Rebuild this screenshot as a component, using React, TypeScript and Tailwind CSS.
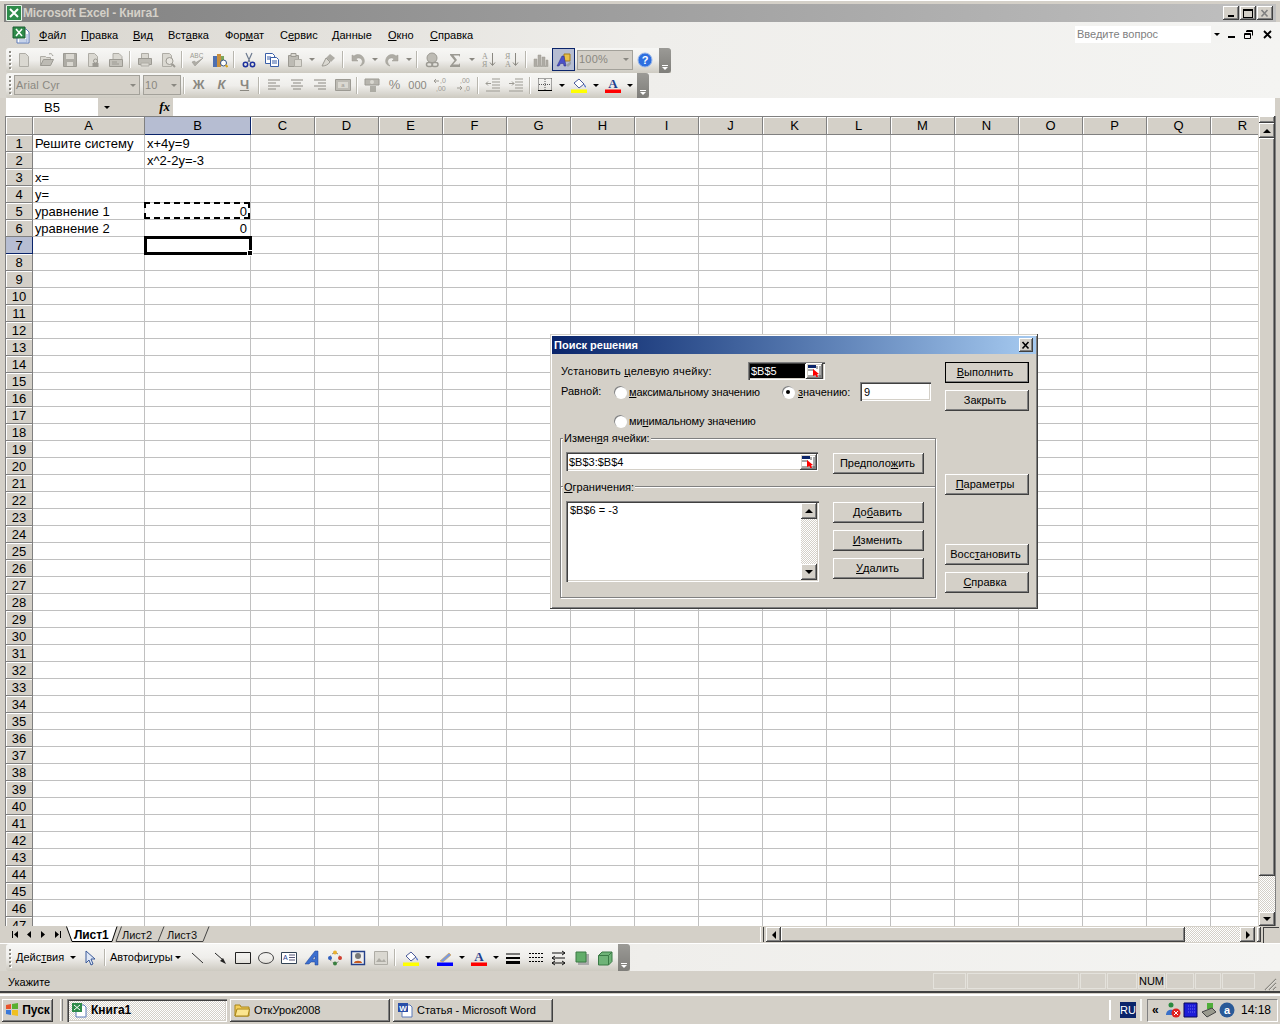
import type { ReactNode } from "react";

const UI = "font-['Liberation_Sans',Arial,sans-serif]";
const raised = "shadow-[inset_-1px_-1px_0_#404040,inset_1px_1px_0_#fff,inset_-2px_-2px_0_#808080]";
const sunken = "shadow-[inset_1px_1px_0_#808080,inset_2px_2px_0_#404040,inset_-1px_-1px_0_#fff,inset_-2px_-2px_0_#d4d0c8]";
const dither = "[background:repeating-conic-gradient(#d4d0c8_0_25%,#fff_0_50%)_0_0/2px_2px]";

const COLS = "ABCDEFGHIJKLMNOPQR".split("");
const colWidth = (i: number) => (i === 0 ? 112 : i === 1 ? 106 : 64);

const CELLS: Record<string, string> = {
  A1: "Решите систему",
  B1: "x+4y=9",
  B2: "x^2-2y=-3",
  A3: "x=",
  A4: "y=",
  A5: "уравнение 1",
  B5: "0",
  A6: "уравнение 2",
  B6: "0",
};

function S({ children, w = 16, h = 16 }: { children: ReactNode; w?: number; h?: number }) {
  return (
    <svg width={w} height={h} viewBox={`0 0 ${w} ${h}`} className="block shrink-0">
      {children}
    </svg>
  );
}

const GR = "#aeaca5";
const GD = "#9c9a93";
const GL = "#dad8d1";

const icons: Record<string, ReactNode> = {
  new: <path d="M3.5 1.5h6l3 3v10h-9z" fill={GL} stroke={GR} />,
  open: (
    <>
      <path d="M1.5 13.5v-9h5l1 1h4v2" fill={GL} stroke={GR} />
      <path d="M1.5 13.5l3-6h10l-3 6z" fill="#bdbbb4" stroke={GD} />
      <path d="M10 2c2-1 3 0 4 2" fill="none" stroke={GD} />
    </>
  ),
  save: (
    <>
      <path d="M1.5 1.5h13v13h-13z" fill={GR} stroke={GD} />
      <path d="M4 2h8v5H4z" fill={GL} />
      <path d="M5 10h6v4H5z" fill={GL} />
    </>
  ),
  perm: (
    <>
      <path d="M3.5 1.5h6l3 3v10h-9z" fill={GL} stroke={GR} />
      <circle cx="10.5" cy="9" r="2" fill="none" stroke={GD} />
      <path d="M7.5 11h6v4h-6z" fill={GD} />
    </>
  ),
  mail: (
    <>
      <path d="M5 1.5h6l3 3v3H5z" fill={GL} stroke={GR} />
      <path d="M1.5 7.5h13v7h-13z" fill="#c3c1ba" stroke={GD} />
      <path d="M4 10h5M4 12h7" stroke={GD} />
    </>
  ),
  print: (
    <>
      <path d="M4.5 1.5h7v5h-7z" fill={GL} stroke={GR} />
      <path d="M1.5 6.5h13v6h-13z" fill="#bdbbb4" stroke={GD} />
      <path d="M4 11h8v3H4z" fill={GL} stroke={GR} />
    </>
  ),
  preview: (
    <>
      <path d="M2.5 1.5h7l2 2v11h-9z" fill={GL} stroke={GR} />
      <circle cx="9.5" cy="9" r="3.5" fill="#e6e4de" stroke={GD} />
      <path d="M12 12l3 3" stroke={GD} strokeWidth="2" />
    </>
  ),
  spell: (
    <>
      <text x="1" y="6" fontSize="6.5" fontFamily="Liberation Sans" fill={GD}>ABC</text>
      <path d="M3 10l3 4 8-8-7 4.5-1.5-1.5z" fill={GR} stroke={GD} strokeWidth=".6" />
    </>
  ),
  research: (
    <>
      <path d="M1 4h4v11H1z" fill="#4d6fb0" />
      <path d="M5 2h4v13H5z" fill="#c98f3d" />
      <path d="M9 4h3v5H9z" fill="#7ca55a" />
      <circle cx="11.5" cy="11" r="3" fill="#fff" stroke="#34507f" />
      <path d="M13.5 13l2 2" stroke="#d9a520" strokeWidth="2" />
    </>
  ),
  cut: (
    <>
      <path d="M5 1l4 9M11 1L7 10" stroke="#6d7a8f" strokeWidth="1.2" fill="none" />
      <circle cx="4.5" cy="12.5" r="2.2" fill="none" stroke="#1b2f9c" strokeWidth="1.5" />
      <circle cx="11.5" cy="12.5" r="2.2" fill="none" stroke="#1b2f9c" strokeWidth="1.5" />
    </>
  ),
  copy: (
    <>
      <path d="M1.5 1.5h7l2 2v8h-9z" fill="#fff" stroke="#3a5fa8" />
      <path d="M6.5 5.5h6l2 2v7h-8z" fill="#fff" stroke="#3a5fa8" />
      <path d="M3 5h4M3 7h3M8 9h5M8 11h5" stroke="#3a5fa8" />
    </>
  ),
  paste: (
    <>
      <path d="M1.5 3.5h10v11h-10z" fill="#bdbbb4" stroke={GD} />
      <path d="M4 1.5h5v3H4z" fill={GL} stroke={GD} />
      <path d="M7.5 7.5h7v7h-7z" fill={GL} stroke={GR} />
    </>
  ),
  painter: (
    <>
      <path d="M9 2l5 4-4 4-5-4z" fill={GR} />
      <path d="M5 6L1 14c3 0 6-1 8-4z" fill={GL} stroke={GD} />
    </>
  ),
  undo: <path d="M2 3v6h6L6 7c2-2 5-1 6 1 1 2 0 4-2 6 4-1 5-4 4-7-1-4-6-6-10-3z" fill={GR} stroke={GD} strokeWidth=".5" />,
  redo: <path d="M14 3v6H8l2-2c-2-2-5-1-6 1-1 2 0 4 2 6-4-1-5-4-4-7 1-4 6-6 10-3z" fill={GR} stroke={GD} strokeWidth=".5" />,
  link: (
    <>
      <circle cx="8" cy="6" r="5" fill="#bdbbb4" stroke={GD} />
      <rect x="2.5" y="10.5" width="6" height="4" rx="2" fill="none" stroke={GD} strokeWidth="1.5" />
      <rect x="8" y="10.5" width="6" height="4" rx="2" fill="none" stroke={GD} strokeWidth="1.5" />
    </>
  ),
  sigma: <path d="M3 2h10v3l-1-1.5H6.5L10 8l-4 4.500h6l1-1.500V15H3v-1l4.500-5.500L3 3z" fill={GD} />,
  sortA: (
    <>
      <text x="1" y="7" fontSize="8" fontFamily="Liberation Serif" fill={GD}>А</text>
      <text x="1" y="15" fontSize="8" fontFamily="Liberation Serif" fill={GD}>Я</text>
      <path d="M11.500 1v12M9 10.500l2.500 3 2.500-3" stroke="#8a8881" fill="none" />
    </>
  ),
  sortZ: (
    <>
      <text x="1" y="7" fontSize="8" fontFamily="Liberation Serif" fill={GD}>Я</text>
      <text x="1" y="15" fontSize="8" fontFamily="Liberation Serif" fill={GD}>А</text>
      <path d="M11.500 1v12M9 10.500l2.500 3 2.500-3" stroke="#8a8881" fill="none" />
    </>
  ),
  chart: <path d="M1 14V7h3V14h1V3h3v11h1V5h3v9h1V8h2v6.500H1z" fill={GR} stroke={GD} strokeWidth=".5" />,
  drawing: (
    <>
      <path d="M8 2h6v7H8z" fill="#e8c04a" stroke="#a67c1a" />
      <path d="M1 14L6 4h2l2 10H8l-.5-2.500H4.500L3 14z" fill="#4a50c8" stroke="#2a2c80" strokeWidth=".5" />
      <path d="M10 13l5-4v3l-3 3z" fill="#9aa0a8" />
    </>
  ),
  help: (
    <>
      <circle cx="8" cy="8" r="7" fill="#2e6fe0" stroke="#9ab8ea" />
      <text x="8" y="12" fontSize="11" fontWeight="bold" textAnchor="middle" fontFamily="Liberation Sans" fill="#fff">?</text>
    </>
  ),
  merge: (
    <>
      <path d="M.5 2.500h15v11H.5z" fill="#bdbbb4" stroke={GD} />
      <path d="M3 5h10v6H3z" fill={GL} />
      <text x="8" y="10" fontSize="6" textAnchor="middle" fontFamily="Liberation Sans" fill={GD}>a</text>
    </>
  ),
  money: (
    <>
      <path d="M1 2h14v6H1z" fill="#b8b6af" stroke={GD} />
      <circle cx="8" cy="5" r="2" fill={GL} />
      <path d="M6 10h6M6 12h6M6 14h6" stroke={GD} strokeWidth="1.400" />
    </>
  ),
  incDec: (
    <>
      <path d="M1 4h5M3 2L1 4l2 2" stroke={GD} fill="none" />
      <text x="7" y="6" fontSize="7" fontFamily="Liberation Sans" fill={GD}>,0</text>
      <text x="3" y="14" fontSize="7" fontFamily="Liberation Sans" fill={GD}>,00</text>
    </>
  ),
  decInc: (
    <>
      <text x="4" y="6" fontSize="7" fontFamily="Liberation Sans" fill={GD}>,00</text>
      <path d="M1 11h5M4 9l2 2-2 2" stroke={GD} fill="none" />
      <text x="8" y="14" fontSize="7" fontFamily="Liberation Sans" fill={GD}>,0</text>
    </>
  ),
  outdent: <path d="M7 2h8M7 5h8M7 8h8M7 11h8M1 14h14M6 6.500H1M3 4.500l-2 2 2 2" stroke={GD} fill="none" />,
  indent: <path d="M7 2h8M7 5h8M7 8h8M7 11h8M1 14h14M1 6.500h5M4 4.500l2 2-2 2" stroke={GD} fill="none" />,
  borders: (
    <>
      <path d="M1.500 1.500h13M1.500 1.500v11M14.500 1.500v11M8 2v11M2 7.500h12" stroke="#555" strokeDasharray="1 1" fill="none" />
      <path d="M1 13.500h14" stroke="#000" />
    </>
  ),
  fill: (
    <>
      <path d="M3 6l5-4 5 5-5 4z" fill="#fff" stroke="#4a5a9a" />
      <path d="M13 7c1 1 2 2 2 3.500-1 0-2-1-2-3.500z" fill="#3a62c8" />
      <path d="M0 12.500h16V16H0z" fill="#ffff00" />
    </>
  ),
  lineColor: (
    <>
      <path d="M3 11l9-8 2 2-8 7z" fill="#7a9ae0" stroke="#d8a040" strokeWidth=".6" />
      <path d="M0 12.500h16V16H0z" fill="#0000ff" />
    </>
  ),
  fontColor: (
    <>
      <text x="8" y="11" fontSize="13" fontWeight="bold" textAnchor="middle" fontFamily="Liberation Serif" fill="#1f3f8f">A</text>
      <path d="M0 12.500h16V16H0z" fill="#ff0000" />
    </>
  ),
  cursor: <path d="M3 1v12l3-3 2 5 2-1-2-5h4z" fill="#dfe7f5" stroke="#3a5a9a" />,
  line: <path d="M3 3l11 10" stroke="#333" fill="none" />,
  arrowLine: (
    <>
      <path d="M3 3l8 7" stroke="#222" />
      <path d="M8 11l6 3-3-6z" fill="#222" />
    </>
  ),
  rect: <path d="M.5 2.500h15v11H.5z" fill="none" stroke="#222" />,
  oval: <ellipse cx="8" cy="8" rx="7.500" ry="5.500" fill="none" stroke="#444" />,
  textbox: (
    <>
      <path d="M.5 2.500h15v11H.5z" fill="#fff" stroke="#345" />
      <path d="M8 5h6M8 7.500h6M8 10h6" stroke="#557" />
      <text x="2" y="10" fontSize="7" fontFamily="Liberation Sans" fill="#1f3f8f">A</text>
    </>
  ),
  wordart: <path d="M1 14L11 1h3v14h-3v-3H7l-2 2zM8.500 9.500H11V6z" fill="#3b6fd0" stroke="#1f3f8f" strokeWidth=".5" />,
  diagram: (
    <>
      <circle cx="8" cy="8" r="5" fill="none" stroke="#777" strokeDasharray="2 2" />
      <circle cx="8" cy="2.500" r="2" fill="#e8b030" />
      <circle cx="13" cy="8" r="2" fill="#d04030" />
      <circle cx="8" cy="13.500" r="2" fill="#3a8040" />
      <circle cx="3" cy="8" r="2" fill="#3060c0" />
    </>
  ),
  clipart: (
    <>
      <path d="M1.500 1.500h13v13h-13z" fill="#eee" stroke="#24408a" strokeWidth="1.400" />
      <circle cx="8" cy="6" r="3" fill="#777" />
      <path d="M4 13c0-3 8-3 8 0z" fill="#c85a20" />
    </>
  ),
  image: (
    <>
      <path d="M1.500 1.500h13v13h-13z" fill={GL} stroke={GR} />
      <path d="M3 12l3-4 3 3 2-2 2 3z" fill={GR} />
    </>
  ),
  lineStyle: <path d="M1 3.500h14v1H1zM1 7h14v2H1zM1 11h14v3H1z" fill="#000" />,
  dashStyle: <path d="M1 3.500h14M1 7.500h14M1 11.500h14" stroke="#000" strokeDasharray="2 1" fill="none" />,
  arrowStyle: (
    <>
      <path d="M1 3h13M11 1l3 2-3 2M1 8h13M4 6L1 8l3 2M1 13h13M4 11l-3 2 3 2M11 11l3 2-3 2" stroke="#111" fill="none" />
    </>
  ),
  shadow: (
    <>
      <path d="M4 4h11v11H4z" fill="#aaa" />
      <path d="M2 2h10v10H2z" fill="#62ad6a" stroke="#3a7a45" />
    </>
  ),
  cube: <path d="M1.500 5.500L5 2h10v9.500L11.500 15h-10zM1.500 5.500h10V15M11.500 5.500L15 2" fill="#6fb378" stroke="#3a7a45" />,
};

const Arrow = () => <div className="h-0 w-0 border-x-[3px] border-t-[3px] border-x-transparent border-t-black" />;
const GreyArrow = () => <div className="h-0 w-0 border-x-[3px] border-t-[3px] border-x-transparent border-t-[#8a8881]" />;

function Grip() {
  return (
    <div className="flex h-full w-[6px] shrink-0 flex-col justify-center gap-[2px] pl-[3px]">
      {[0, 1, 2, 3, 4].map((i) => (
        <div key={i} className="h-[2px] w-[2px] bg-[#8e8c85] shadow-[1px_1px_0_#fff]" />
      ))}
    </div>
  );
}

function Sep() {
  return <div className="mx-[2px] h-[17px] w-[2px] shrink-0 border-r border-r-white bg-[#b8b6ae]" />;
}

function Tool({ name, active }: { name: string; active?: boolean }) {
  return (
    <div
      className={`flex h-[23px] w-[23px] shrink-0 items-center justify-center ${
        active ? "border border-[#0a246a] bg-[#b6bdd2]" : ""
      }`}
    >
      <S>{icons[name]}</S>
    </div>
  );
}

function Text16({ children, className = "" }: { children: ReactNode; className?: string }) {
  return (
    <div className={`flex h-[23px] w-[23px] shrink-0 items-center justify-center text-[#8a8881] ${className}`}>
      {children}
    </div>
  );
}

function Drop({ black }: { black?: boolean }) {
  return (
    <div className="flex h-[23px] w-[11px] shrink-0 items-center justify-center">
      {black ? <Arrow /> : <GreyArrow />}
    </div>
  );
}

function EndGrip() {
  return (
    <div className="flex h-full w-[12px] shrink-0 flex-col items-center justify-end rounded-r-[3px] bg-gradient-to-b from-[#9b9a96] to-[#7f7e7a] pb-[3px]">
      <div className="mb-[1px] h-px w-[6px] bg-white" />
      <div className="h-0 w-0 border-x-[3px] border-t-[3px] border-x-transparent border-t-white" />
    </div>
  );
}

function Toolbar({ children, className = "" }: { children: ReactNode; className?: string }) {
  return (
    <div
      className={`flex h-[25px] items-center rounded-l-[3px] bg-gradient-to-b from-[#f7f7f5] via-[#efeeeb] to-[#cdcac1] ${className}`}
    >
      {children}
    </div>
  );
}

function Combo({ width, label }: { width: string; label: string }) {
  return (
    <div className={`flex h-[20px] shrink-0 items-center justify-between border border-[#a3a19a] bg-[#d4d0c8] pl-[1px] text-[#8a8881] ${width}`}>
      <span className="text-[11px] tracking-[0.2px]">{label}</span>
      <div className="flex h-full w-[13px] items-center justify-center">
        <GreyArrow />
      </div>
    </div>
  );
}

function Menu() {
  const items: [string, string, string, string][] = [
    ["", "Ф", "айл", "w-[42px]"],
    ["", "П", "равка", "w-[52px]"],
    ["", "В", "ид", "w-[35px]"],
    ["Вст", "а", "вка", "w-[57px]"],
    ["Фор", "м", "ат", "w-[55px]"],
    ["С", "е", "рвис", "w-[52px]"],
    ["", "Д", "анные", "w-[56px]"],
    ["", "О", "кно", "w-[42px]"],
    ["", "С", "правка", "w-[50px]"],
  ];
  return (
    <div className="flex h-[26px] items-center pl-[12px]">
      <S w={18} h={18}>
        <path d="M5 3h9l3 3v11H5z" fill="#fff" stroke="#5a78b8" />
        <path d="M1 1h12v11H1z" fill="#2e8b4a" stroke="#1a5c30" />
        <path d="M4 3l6 7M10 3l-6 7" stroke="#fff" strokeWidth="1.500" />
        <path d="M7 14h8M7 16h8M15 8v8" stroke="#8ea6d4" />
      </S>
      <div className="ml-[9px] flex text-[11px] text-black">
        {items.map(([a, u, b, w]) => (
          <span key={u + b} className={`whitespace-pre ${w}`}>
            {a}
            <u>{u}</u>
            {b}
          </span>
        ))}
      </div>
      <div className="mb-[2px] ml-auto mr-[58px] flex h-[17px] w-[147px] items-center justify-between bg-white pl-[2px] text-[11px] text-[#808080]">
        Введите вопрос
        <div className="flex h-full w-[11px] items-center justify-center bg-[#f3f3f1]">
          <Arrow />
        </div>
      </div>
      <div className="absolute right-[4px] mb-[2px] flex items-center gap-[8px] pr-[3px]">
        <div className="mt-[6px] h-[2px] w-[7px] bg-black" />
        <S w={11} h={11}>
          <path d="M3.500 1.500h6v5M3 2.500h7M1.500 4.500h6v5h-6zM1 5.500h7" fill="none" stroke="#000" />
        </S>
        <S w={11} h={9}>
          <path d="M2 1l7 7M9 1L2 8" stroke="#000" strokeWidth="1.800" />
        </S>
      </div>
    </div>
  );
}

function Spreadsheet() {
  const rows = Array.from({ length: 47 }, (_, i) => i + 1);
  return (
    <div className="h-[810px] min-w-0 flex-1 overflow-hidden border-t border-t-[#808080] bg-white font-['Liberation_Sans',Arial,sans-serif] text-[13px] text-black">
      <div className="flex h-[18px]">
        <div className="h-full w-[27px] shrink-0 border-r border-b border-[#808080] bg-[#d4d0c8] shadow-[inset_1px_1px_0_#fff]" />
        {COLS.map((c, i) => (
          <div
            key={c}
            style={{ width: colWidth(i) }}
            className={`flex h-full shrink-0 items-center justify-center border-r border-b pt-px text-[13px] ${
              c === "B"
                ? "border-[#0a246a] bg-[#b6bdd2]"
                : "border-[#808080] bg-[#d4d0c8] shadow-[inset_1px_1px_0_#fff]"
            }`}
          >
            {c}
          </div>
        ))}
      </div>
      {rows.map((r) => (
        <div key={r} className="flex h-[17px]">
          <div
            className={`flex h-full w-[27px] shrink-0 items-center justify-center border-r border-b pt-[2px] ${
              r === 7
                ? "border-[#0a246a] bg-[#b6bdd2]"
                : "border-[#808080] bg-[#d4d0c8] shadow-[inset_1px_1px_0_#fff]"
            }`}
          >
            {r}
          </div>
          {COLS.map((c, i) => {
            const key = `${c}${r}`;
            const value = CELLS[key];
            return (
              <div
                key={key}
                style={{ width: colWidth(i) }}
                className={`relative h-full shrink-0 overflow-visible whitespace-nowrap border-r border-b border-[#c0c0c0] pr-[3px] pl-[2px] leading-[18px] ${
                  value === "0" ? "text-right" : "text-left"
                }`}
              >
                {value}
                {key === "B5" && (
                  <div className="absolute -top-[1px] -left-[1px] h-[17px] w-[106px] border-2 border-dashed border-black" />
                )}
                {key === "B7" && (
                  <>
                    <div className="absolute -top-[1px] -left-[1px] z-10 h-[19px] w-[108px] border-[3px] border-black" />
                    <div className="absolute -right-[3px] -bottom-[3px] z-10 h-[6px] w-[6px] border border-white bg-black" />
                  </>
                )}
              </div>
            );
          })}
        </div>
      ))}
    </div>
  );
}

function ScrollBtn({ dir, className = "" }: { dir: "up" | "down" | "left" | "right"; className?: string }) {
  const shape = {
    up: "border-x-[4px] border-b-[4px] border-x-transparent border-b-black",
    down: "border-x-[4px] border-t-[4px] border-x-transparent border-t-black",
    left: "border-y-[4px] border-r-[4px] border-y-transparent border-r-black",
    right: "border-y-[4px] border-l-[4px] border-y-transparent border-l-black",
  }[dir];
  return (
    <div className={`flex shrink-0 items-center justify-center bg-[#d4d0c8] ${raised} ${className}`}>
      <div className={`h-0 w-0 ${shape}`} />
    </div>
  );
}

function VScroll() {
  return (
    <div className="flex h-[810px] w-[17px] shrink-0 flex-col pl-px">
      <div className={`h-[7px] shrink-0 bg-[#d4d0c8] ${raised}`} />
      <ScrollBtn dir="up" className="h-[15px] w-[16px]" />
      <div className={`h-[738px] shrink-0 bg-[#d4d0c8] ${raised}`} />
      <div className={`flex-1 ${dither}`} />
      <ScrollBtn dir="down" className="h-[14px] w-[16px]" />
    </div>
  );
}

function SheetTabs() {
  return (
    <div className="flex h-[17px] items-stretch bg-[#d4d0c8] pl-[6px] text-[11px]">
      <div className="flex w-[60px] shrink-0 items-center">
        <S w={60} h={15}>
          <path d="M6 4h1v7H6zM12 4l-4 3.500 4 3.500z" fill="#000" />
          <path d="M25 4l-4 3.500 4 3.500z" fill="#000" />
          <path d="M35 4l4 3.500-4 3.500z" fill="#000" />
          <path d="M49 4l4 3.500-4 3.500zM54 4h1v7h-1z" fill="#000" />
        </S>
      </div>
      <div className="relative flex w-[150px] shrink-0 items-center pt-px">
        <svg width="150" height="17" viewBox="0 0 150 17" className="absolute top-0 left-0">
          <path d="M.5 .5L6 15.500H46L51 .5" fill="#fff" stroke="#000" />
          <path d="M55.500 .5L50 15.500H92" fill="none" stroke="#444" />
          <path d="M98 .5L92 15.500H137L143 .5" fill="none" stroke="#444" />
        </svg>
        <span className="relative ml-[8px] w-[48px] text-[12px] font-bold tracking-[-0.1px] text-black">Лист1</span>
        <span className="relative w-[45px] text-[#111]">Лист2</span>
        <span className="relative text-[#111]">Лист3</span>
      </div>
      <div className="flex-1" />
      <div className="my-[1px] mr-[2px] w-[4px] shrink-0 bg-[#d4d0c8] shadow-[inset_-1px_0_0_#404040,inset_1px_0_0_#fff]" />
      <ScrollBtn dir="left" className="mt-[1px] h-[15px] w-[15px]" />
      <div className={`mt-[1px] h-[15px] w-[404px] shrink-0 bg-[#d4d0c8] ${raised}`} />
      <div className={`mt-[1px] h-[15px] w-[55px] shrink-0 ${dither}`} />
      <ScrollBtn dir="right" className="mt-[1px] h-[15px] w-[15px]" />
      <div className={`ml-[2px] mt-[1px] h-[15px] w-[4px] shrink-0 bg-[#d4d0c8] ${raised}`} />
      <div className="mt-[1px] ml-[2px] h-[16px] w-[16px] shrink-0 border-t border-l border-[#404040]" />
    </div>
  );
}

function WinBtn({ children, className = "", isDefault }: { children: ReactNode; className?: string; isDefault?: boolean }) {
  return (
    <div
      className={`flex h-[21px] shrink-0 items-center justify-center whitespace-pre bg-[#d4d0c8] ${raised} ${
        isDefault ? "outline outline-1 -outline-offset-1 outline-black" : ""
      } ${className}`}
    >
      {children}
    </div>
  );
}

function RefEdit({ className = "" }: { className?: string }) {
  return (
    <div className={`flex h-[16px] w-[17px] shrink-0 items-center justify-center bg-[#d4d0c8] ${raised} ${className}`}>
      <S w={13} h={12}>
        <path d="M0 0h13v12H0z" fill="#fff" />
        <path d="M0 0h8v3H0z" fill="#0a246a" />
        <path d="M0 5h6M0 11h13M12 1v11M9 1v3" stroke="#555" />
        <path d="M5 4l6 5-2 .5 1 2.500-1.500 .5-1-2.500L5 11z" fill="#f00" />
      </S>
    </div>
  );
}

function Radio({ checked }: { checked?: boolean }) {
  return (
    <div className="flex h-[12px] w-[12px] shrink-0 items-center justify-center rounded-full bg-white shadow-[inset_1px_1px_0_#808080,1px_1px_0_#fff]">
      {checked && <div className="h-[4px] w-[4px] rounded-full bg-black" />}
    </div>
  );
}

function Dialog() {
  return (
    <div className="absolute left-[550px] top-[334px] h-[275px] w-[488px] bg-[#d4d0c8] p-[2px] text-[11px] text-black shadow-[inset_-1px_-1px_0_#404040,inset_1px_1px_0_#d4d0c8,inset_2px_2px_0_#fff,inset_-2px_-2px_0_#808080]">
      <div className="flex h-[18px] items-center justify-between bg-gradient-to-r from-[#0a246a] to-[#a6caf0] pr-[3px] pl-[2px]">
        <span className="text-[11px] font-bold text-white">Поиск решения</span>
        <div className={`flex h-[14px] w-[14px] items-center justify-center bg-[#d4d0c8] ${raised}`}>
          <S w={10} h={9}>
            <path d="M1.500 1l6 6.500M7.500 1l-6 6.500" stroke="#000" strokeWidth="1.600" />
          </S>
        </div>
      </div>

      <div className="flex">
        <div className="w-[393px] shrink-0 pl-[8px]">
          <div className="mt-[8px] flex h-[18px] items-center">
            <span className="w-[188px] shrink-0 whitespace-pre pl-px tracking-[0.22px]">
              Установить <u>ц</u>елевую ячейку:
            </span>
            <div className={`flex h-[18px] w-[77px] shrink-0 items-center justify-between bg-white pr-[2px] pl-[2px] ${sunken}`}>
              <span className="h-[14px] w-[55px] bg-black pl-px leading-[14px] text-white">$B$5</span>
              <RefEdit className="h-[14px]" />
            </div>
          </div>
          <div className="mt-[2px] flex h-[19px] items-center">
            <span className="w-[54px] shrink-0 pl-px">Равной:</span>
            <Radio />
            <span className="ml-[3px] w-[153px] shrink-0 whitespace-pre pt-[2px] tracking-[-0.14px]">
              <u>м</u>аксимальному значению
            </span>
            <Radio checked />
            <span className="ml-[4px] w-[62px] shrink-0 whitespace-pre pt-[2px]">
              <u>з</u>начению:
            </span>
            <div className={`flex h-[19px] w-[71px] shrink-0 items-center bg-white pt-px pl-[4px] ${sunken}`}>9</div>
          </div>
          <div className="mt-[11px] flex h-[18px] items-center pl-[54px]">
            <Radio />
            <span className="ml-[3px] whitespace-pre tracking-[-0.14px]">
              ми<u>н</u>имальному значению
            </span>
          </div>

          <div className="relative mt-[8px] flex h-[49px] w-[376px] items-start border border-[#808080] pt-[13px] pl-[5px] shadow-[inset_1px_1px_0_#fff,1px_1px_0_#fff]">
            <span className="absolute -top-[9px] left-[2px] whitespace-pre bg-[#d4d0c8] px-px">
              Измен<u>я</u>я ячейки:
            </span>
            <div className={`flex h-[19px] w-[252px] shrink-0 items-center justify-between bg-white pt-px pr-[1px] pl-[3px] ${sunken}`}>
              $B$3:$B$4
              <RefEdit />
            </div>
            <WinBtn className="mt-px ml-[15px] w-[91px] pr-[2px]">
              Предполо<u>ж</u>ить
            </WinBtn>
          </div>

          <div className="relative -mt-px flex h-[112px] w-[376px] items-start border border-[#808080] pt-[14px] pl-[5px] shadow-[inset_1px_1px_0_#fff,1px_1px_0_#fff]">
            <span className="absolute -top-[8px] left-[2px] whitespace-pre bg-[#d4d0c8] px-px">
              <u>О</u>граничения:
            </span>
            <div className={`flex h-[81px] w-[253px] shrink-0 bg-white p-[2px] ${sunken}`}>
              <div className="-mt-px flex-1 pl-[2px]">$B$6 = -3</div>
              <div className="flex w-[16px] shrink-0 flex-col">
                <ScrollBtn dir="up" className="h-[16px] w-[16px]" />
                <div className={`flex-1 ${dither}`} />
                <ScrollBtn dir="down" className="h-[16px] w-[16px]" />
              </div>
            </div>
            <div className="mt-px ml-[14px] flex w-[91px] flex-col gap-[7px]">
              <WinBtn className="pr-[2px]">
                До<u>б</u>авить
              </WinBtn>
              <WinBtn className="pr-[2px]">
                <u>И</u>зменить
              </WinBtn>
              <WinBtn className="pr-[2px]">
                <u>У</u>далить
              </WinBtn>
            </div>
          </div>
        </div>

        <div className="flex w-[84px] shrink-0 flex-col pt-[8px]">
          <WinBtn isDefault className="pr-[4px]">
            <u>В</u>ыполнить
          </WinBtn>
          <WinBtn className="mt-[7px] pr-[4px]">Закрыть</WinBtn>
          <WinBtn className="mt-[63px] pr-[4px]">
            <u>П</u>араметры
          </WinBtn>
          <WinBtn className="mt-[49px] pr-[3px]">
            Восс<u>т</u>ановить
          </WinBtn>
          <WinBtn className="mt-[7px] pr-[4px]">
            <u>С</u>правка
          </WinBtn>
        </div>
      </div>
    </div>
  );
}

function StatusBar() {
  const panes = ["w-[33px]", "w-[112px]", "w-[26px]", "w-[30px]", "w-[27px]", "w-[28px]", "w-[26px]", "w-[33px]"];
  return (
    <div className="flex h-[20px] items-center bg-[#d4d0c8] pr-[3px] pl-[8px] text-[11px] text-black">
      <span className="pt-[2px]">Укажите</span>
      <div className="ml-auto flex h-[16px] items-stretch gap-px">
        {panes.map((w, i) => (
          <div key={i} className={`flex items-center justify-center border border-[#e4e2dc] pt-px ${w}`}>
            {i === 4 ? "NUM" : ""}
          </div>
        ))}
      </div>
      <div className="ml-[9px] self-end">
        <S w={13} h={13}>
          <path d="M1 12L12 1M5 12l7-7M9 12l3-3" stroke="#8a8881" strokeWidth="1.200" />
          <path d="M2 12L12 2M6 12l6-6M10 12l2-2" stroke="#fff" strokeWidth=".5" />
        </S>
      </div>
    </div>
  );
}

function TaskBtn({ icon, label, pressed }: { icon: ReactNode; label: string; pressed?: boolean }) {
  return (
    <div
      className={`flex h-[23px] w-[160px] shrink-0 items-center gap-[4px] pl-[4px] text-[11px] text-black ${
        pressed ? `font-bold ${sunken} ${dither}` : `bg-[#d4d0c8] ${raised}`
      }`}
    >
      {icon}
      <span className={pressed ? "text-[12px]" : ""}>{label}</span>
    </div>
  );
}

function Taskbar() {
  return (
    <div className="flex flex-1 items-center border-t-2 border-t-white bg-[#d4d0c8] pr-[2px] pl-[2px] text-[11px] shadow-[0_-1px_0_#d4d0c8]">
      <div className={`flex h-[23px] w-[51px] shrink-0 items-center justify-center gap-[3px] bg-[#d4d0c8] ${raised} text-[12px] font-bold`}>
        <S w={14} h={14}>
          <path d="M1 2l5-1v5H1z" fill="#e8542c" />
          <path d="M7 1l6-1v6H7z" fill="#58b030" />
          <path d="M1 7h5v5l-5-1z" fill="#3a78d8" />
          <path d="M7 7h6v6l-6-1z" fill="#f0c020" />
        </S>
        Пуск
      </div>
      <div className={`ml-[7px] h-[22px] w-[3px] shrink-0 bg-[#d4d0c8] shadow-[inset_1px_0_0_#fff,inset_-1px_0_0_#808080]`} />
      <div className="ml-[4px] flex gap-[3px]">
        <TaskBtn
          pressed
          label="Книга1"
          icon={
            <S>
              <path d="M5 3h8l2 2v10H5z" fill="#fff" stroke="#5a78b8" />
              <path d="M1 1h10v9H1z" fill="#2e8b4a" />
              <path d="M3 3l6 5M9 3L3 8" stroke="#fff" />
            </S>
          }
        />
        <TaskBtn
          label="ОткУрок2008"
          icon={
            <S>
              <path d="M1 3h5l1 2h8v9H1z" fill="#f5cf5a" stroke="#a88416" />
              <path d="M1 14l2-7h12.500l-1.500 7z" fill="#fbe58f" stroke="#a88416" />
            </S>
          }
        />
        <TaskBtn
          label="Статья - Microsoft Word"
          icon={
            <S>
              <path d="M5 3h8l2 2v10H5z" fill="#fff" stroke="#5a78b8" />
              <path d="M1 1h10v9H1z" fill="#2a4fa8" />
              <text x="6" y="9" fontSize="8" fontWeight="bold" textAnchor="middle" fontFamily="Liberation Sans" fill="#fff">W</text>
            </S>
          }
        />
      </div>
      <div className="ml-auto h-[20px] w-[2px] bg-white" />
      <div className="ml-[9px] flex h-[16px] w-[16px] items-center justify-center bg-[#0a246a] text-[11px] text-white">RU</div>
      <div className="ml-[4px] h-[22px] w-[2px] bg-[#f5f5f2]" />
      <div className="ml-[5px] flex h-[23px] w-[131px] items-center border border-t-[#808080] border-r-white border-b-white border-l-[#808080] pl-[4px]">
        <span className="w-[13px] text-[12px] font-bold leading-none">«</span>
        <div className="flex gap-[2px]">
          <S>
            <circle cx="6" cy="3" r="2.500" fill="#2a8a40" />
            <path d="M1 13c0-7 10-7 10 0z" fill="#3a70c8" />
            <circle cx="11" cy="11" r="4.500" fill="#e02020" />
            <path d="M9 9l4 4M13 9l-4 4" stroke="#fff" />
          </S>
          <S>
            <path d="M1 1h13v14H1z" fill="#1c1cd8" stroke="#06065a" />
            <path d="M5 4h7M5 7h7M5 10h7" stroke="#6a6af0" strokeDasharray="1 1" />
          </S>
          <S>
            <path d="M6 1h6v6H6z" fill="#4fae3a" />
            <path d="M1 10l10-4 4 4-9 5z" fill="#9a9a8e" stroke="#444" />
          </S>
          <S>
            <circle cx="8" cy="8" r="7.500" fill="#2a5a98" />
            <text x="8" y="12" fontSize="11" fontWeight="bold" textAnchor="middle" fontFamily="Liberation Sans" fill="#fff">a</text>
          </S>
        </div>
        <span className="ml-[6px] text-[12px]">14:18</span>
      </div>
    </div>
  );
}

export default function App() {
  return (
    <div className={`relative flex h-[1024px] w-[1280px] flex-col overflow-hidden bg-[#d4d0c8] ${UI}`}>
      <div className="h-[4px] shrink-0 border-t border-t-white" />
      <div className="mx-[4px] flex h-[18px] shrink-0 items-center bg-gradient-to-r from-[#808080] to-[#c0c0c0]">
        <div className="ml-[2px]">
          <S>
            <path d="M.5 .5h15v15H.5z" fill="#2e8b4a" stroke="#e8f5ea" />
            <path d="M4 4l8 8M12 4l-8 8" stroke="#fff" strokeWidth="2" />
          </S>
        </div>
        <span className="ml-[1px] text-[12px] font-bold tracking-[-0.17px] text-[#d4d0c8]">Microsoft Excel - Книга1</span>
        <div className="mr-[3px] ml-auto flex gap-px">
          <div className={`flex h-[14px] w-[16px] items-end justify-start bg-[#d4d0c8] pb-[3px] pl-[5px] ${raised}`}>
            <div className="h-[2px] w-[6px] bg-black" />
          </div>
          <div className={`flex h-[14px] w-[16px] items-center justify-center bg-[#d4d0c8] ${raised}`}>
            <div className="h-[9px] w-[10px] border border-t-2 border-black" />
          </div>
          <div className={`flex h-[14px] w-[16px] items-center justify-center bg-[#d4d0c8] ${raised}`}>
            <S w={10} h={9}>
              <path d="M1.500 1l6 6.500M7.500 1l-6 6.500" stroke="#808080" strokeWidth="1.600" />
            </S>
          </div>
        </div>
      </div>

      <div className="relative h-[76px] shrink-0 bg-gradient-to-r from-[#d8d5ce] via-[#efeeeb] via-50% to-[#f4f4f2]">
        <Menu />
        <div className="pl-[6px]">
          <Toolbar className="w-[665px] pb-[2px]">
            <Grip />
            {["new", "open", "save", "perm", "mail"].map((n) => (
              <Tool key={n} name={n} />
            ))}
            <Sep />
            <Tool name="print" />
            <Tool name="preview" />
            <Sep />
            <Tool name="spell" />
            <Tool name="research" />
            <Sep />
            <Tool name="cut" />
            <Tool name="copy" />
            <Tool name="paste" />
            <Drop />
            <Tool name="painter" />
            <Sep />
            <Tool name="undo" />
            <Drop />
            <Tool name="redo" />
            <Drop />
            <Sep />
            <Tool name="link" />
            <Tool name="sigma" />
            <Drop />
            <Tool name="sortA" />
            <Tool name="sortZ" />
            <Sep />
            <Tool name="chart" />
            <Tool name="drawing" active />
            <div className="ml-[2px]">
              <Combo width="w-[56px]" label="100%" />
            </div>
            <Tool name="help" />
            <div className="ml-auto h-[25px] self-start">
              <EndGrip />
            </div>
          </Toolbar>
          <Toolbar className="w-[643px] pb-px">
            <Grip />
            <div className="ml-[2px]">
              <Combo width="w-[126px]" label="Arial Cyr" />
            </div>
            <div className="ml-[3px]">
              <Combo width="w-[38px]" label="10" />
            </div>
            <Sep />
            <Text16 className="text-[13px] font-bold">Ж</Text16>
            <Text16 className="text-[13px] font-bold italic">К</Text16>
            <Text16 className="text-[13px] font-bold underline">Ч</Text16>
            <Sep />
            {["M2 3h12M2 6h8M2 9h12M2 12h8", "M2 3h12M4 6h8M2 9h12M4 12h8", "M2 3h12M6 6h8M2 9h12M6 12h8"].map((d) => (
              <div key={d} className="flex h-[23px] w-[23px] shrink-0 items-center justify-center">
                <S>
                  <path d={d} stroke="#8a8881" fill="none" />
                </S>
              </div>
            ))}
            <Tool name="merge" />
            <Sep />
            <Tool name="money" />
            <Text16 className="text-[13px]">%</Text16>
            <Text16 className="text-[11px]">000</Text16>
            <Tool name="incDec" />
            <Tool name="decInc" />
            <Sep />
            <Tool name="outdent" />
            <Tool name="indent" />
            <Sep />
            <Tool name="borders" />
            <Drop black />
            <Tool name="fill" />
            <Drop black />
            <Tool name="fontColor" />
            <Drop black />
            <div className="ml-auto h-[25px] self-start">
              <EndGrip />
            </div>
          </Toolbar>
        </div>
      </div>

      <div className="flex h-[18px] shrink-0 items-center pl-[6px] text-[13px]">
        <div className="flex h-full w-[92px] shrink-0 items-center justify-center bg-white pt-[2px] text-black">B5</div>
        <div className="flex h-full w-[18px] shrink-0 items-center justify-center">
          <Arrow />
        </div>
        <div className="flex h-full w-[57px] shrink-0 items-center justify-end pr-[3px] font-['Liberation_Serif',serif] text-[13px] font-bold italic text-black">
          fx
        </div>
        <div className="mr-[5px] h-full flex-1 bg-white" />
      </div>

      <div className="flex shrink-0 pr-[4px] pl-[5px]">
        <div className="h-[810px] w-px shrink-0 bg-[#808080]" />
        <Spreadsheet />
        <VScroll />
        <div className="h-[810px] w-px shrink-0 bg-[#808080]" />
      </div>

      <div className="shrink-0 pr-[1px]">
        <SheetTabs />
      </div>

      <div className="h-[28px] shrink-0 border-t border-t-white bg-gradient-to-r from-[#d8d5ce] via-[#efeeeb] via-50% to-[#f4f4f2] pl-[6px]">
        <Toolbar className="h-[27px] w-[624px] text-[11px] text-black">
          <Grip />
          <span className="ml-[4px] w-[50px] shrink-0 whitespace-pre">
            Дейс<u>т</u>вия
          </span>
          <div className="ml-[3px] flex w-[8px] justify-center">
            <Arrow />
          </div>
          <div className="ml-[2px]">
            <Tool name="cursor" />
          </div>
          <Sep />
          <span className="ml-[2px] w-[64px] shrink-0 whitespace-pre">
            Автофи<u>г</u>уры
          </span>
          <div className="flex w-[8px] justify-center">
            <Arrow />
          </div>
          <div className="ml-[3px] flex">
            {["line", "arrowLine", "rect", "oval", "textbox", "wordart", "diagram", "clipart", "image"].map((n) => (
              <Tool key={n} name={n} />
            ))}
          </div>
          <Sep />
          <div className="ml-px flex">
            <Tool name="fill" />
            <Drop black />
          </div>
          <Tool name="lineColor" />
          <Drop black />
          <Tool name="fontColor" />
          <Drop black />
          {["lineStyle", "dashStyle", "arrowStyle", "shadow", "cube"].map((n) => (
            <Tool key={n} name={n} />
          ))}
          <div className="ml-auto h-[27px] self-start">
            <EndGrip />
          </div>
        </Toolbar>
      </div>

      <div className="shrink-0">
        <StatusBar />
      </div>
      <div className="h-[2px] shrink-0 bg-[#404040]" />
      <div className="h-px shrink-0 bg-[#d4d0c8]" />
      <Taskbar />

      <Dialog />
    </div>
  );
}
